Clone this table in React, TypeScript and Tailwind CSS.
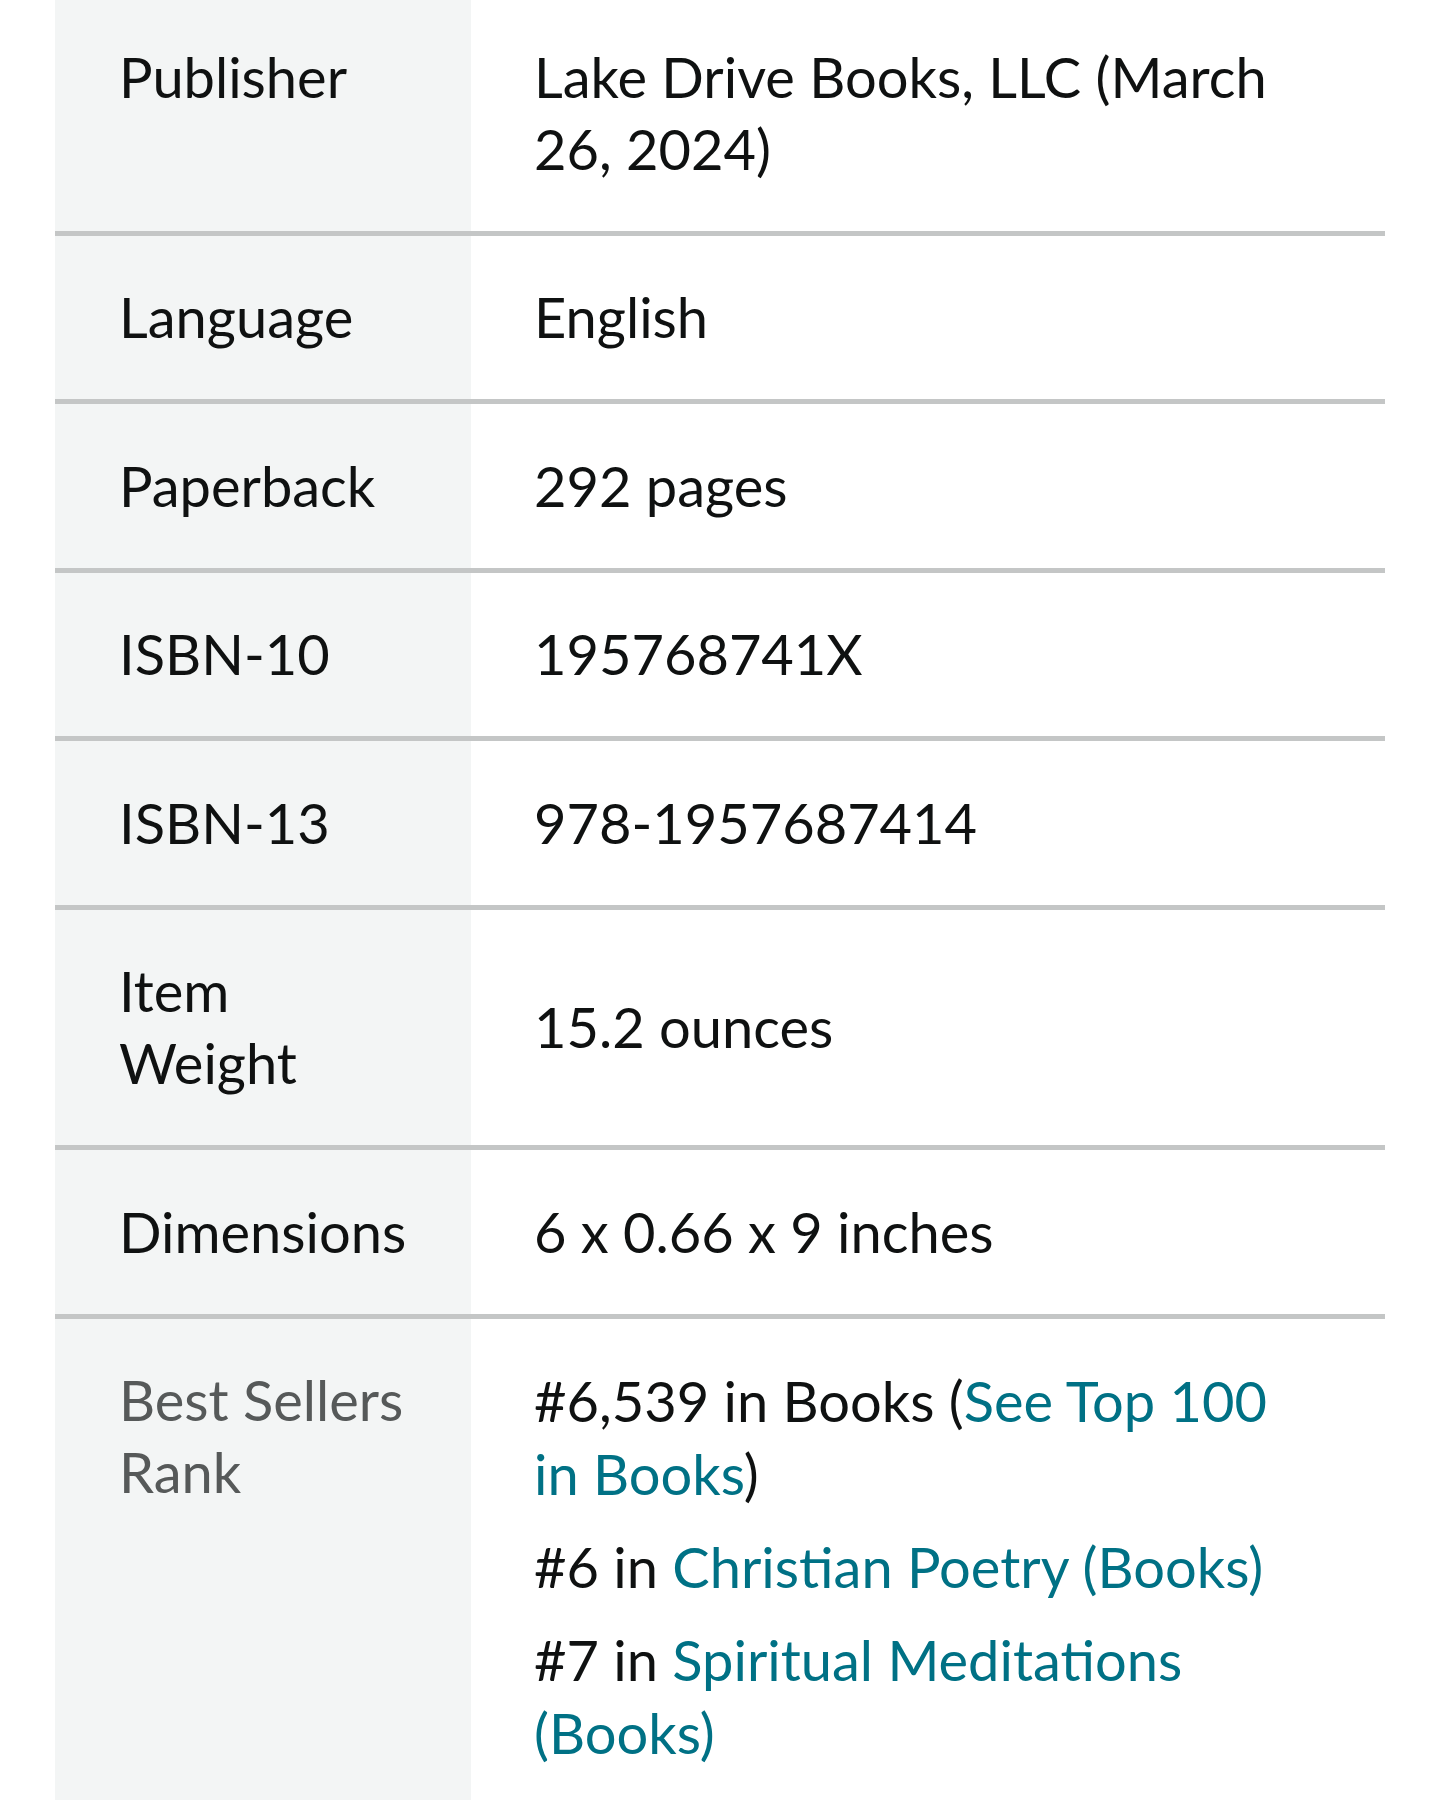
import React from "react";

type Row = {
  label: string;
  value: React.ReactNode;
  center?: boolean;
  muted?: boolean;
};

const Link: React.FC<{ children: React.ReactNode }> = ({ children }) => (
  <span className="text-[#007185]">{children}</span>
);

const rows: Row[] = [
  { label: "Publisher", value: "Lake Drive Books, LLC (March 26, 2024)" },
  { label: "Language", value: "English" },
  { label: "Paperback", value: "292 pages" },
  { label: "ISBN-10", value: "195768741X" },
  { label: "ISBN-13", value: "978-1957687414" },
  { label: "Item Weight", value: "15.2 ounces", center: true },
  { label: "Dimensions", value: "6 x 0.66 x 9 inches" },
  {
    label: "Best Sellers Rank",
    muted: true,
    value: (
      <div className="flex flex-col gap-[20px] leading-[73px]">
        <div>
          #6,539 in Books (<Link>See Top 100 in Books</Link>)
        </div>
        <div>
          #6 in <Link>Christian Poetry (Books)</Link>
        </div>
        <div>
          #7 in <Link>Spiritual Meditations (Books)</Link>
        </div>
      </div>
    ),
  },
];

const App: React.FC = () => {
  return (
    <div
      className="w-[1440px] h-[1800px] overflow-hidden bg-white text-[#0f1111] text-[56px] leading-[72px]"
      style={{ fontFamily: "Lato, 'Noto Sans', sans-serif" }}
    >
      <div className="mx-[55px] -mt-[5px] flex flex-col">
        {rows.map((row, i) => (
          <div
            key={row.label}
            className={`grid grid-cols-[416px_1fr] ${
              i < rows.length - 1 ? "border-b-[5px] border-[#c4c6c6]" : ""
            } ${row.center ? "items-center" : "items-start"}`}
          >
            <div
              className={`bg-[#f3f5f5] self-stretch pl-[64px] pr-[40px] py-[45.75px] ${
                row.muted ? "text-[#565959]" : ""
              }`}
            >
              {row.label === "Item Weight" ? (
                <>
                  Item
                  <br />
                  Weight
                </>
              ) : row.label === "Best Sellers Rank" ? (
                <>
                  Best Sellers
                  <br />
                  Rank
                </>
              ) : (
                row.label
              )}
            </div>
            <div className="pl-[63px] pr-[64px] py-[45.75px]">{row.value}</div>
          </div>
        ))}
      </div>
    </div>
  );
};

export default App;
